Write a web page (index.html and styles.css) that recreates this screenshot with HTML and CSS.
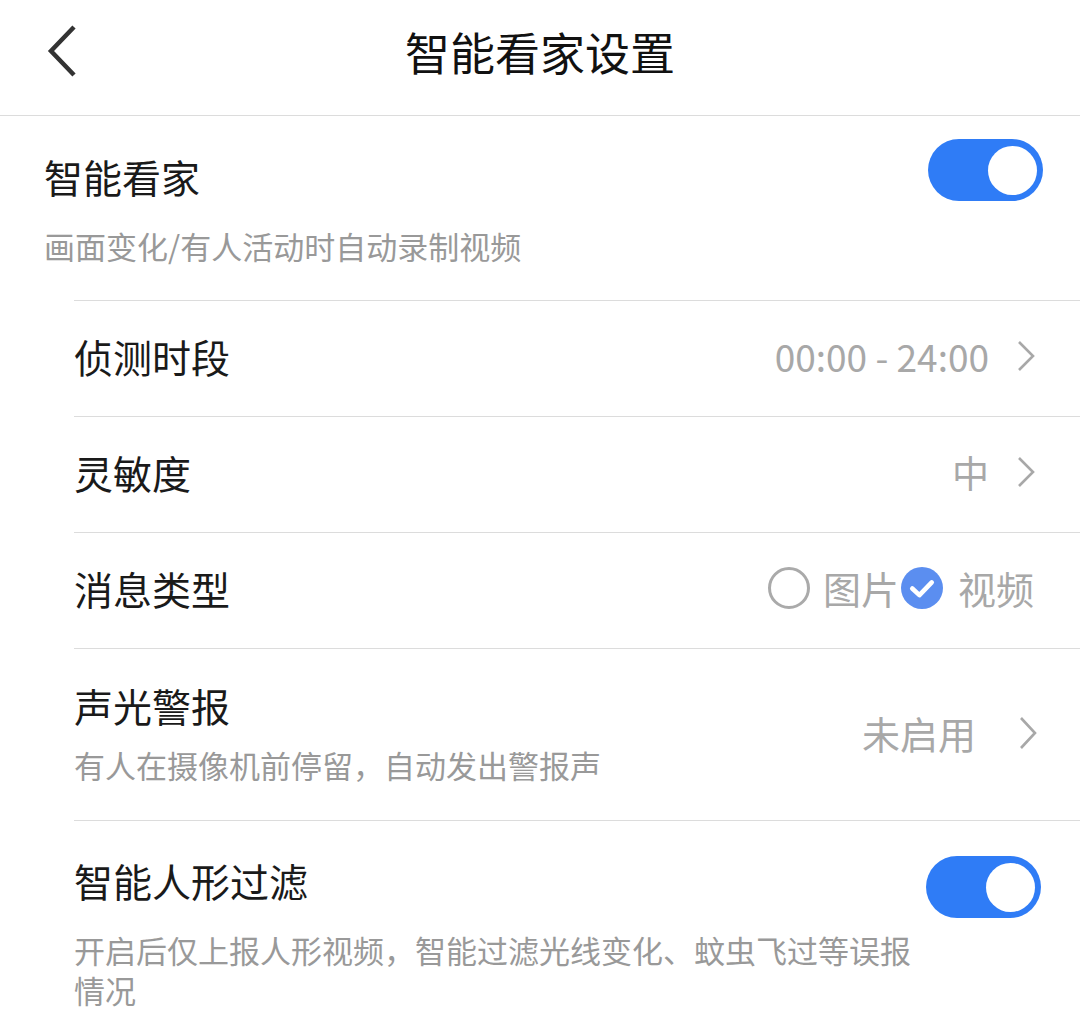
FILE: index.html
```html
<!DOCTYPE html>
<html lang="zh-CN">
<head>
    <meta charset="UTF-8">
    <meta name="viewport" content="width=device-width, initial-scale=1.0">
    <title>智能看家设置</title>
    <link rel="stylesheet" href="styles.css">
</head>
<body>
    <!-- Top bar -->
    <header class="topbar">
        <span class="back">
            <svg width="34" height="52" viewBox="0 0 34 52"><polyline points="28,2 5,26 28,50" fill="none" stroke="#333" stroke-width="4.5"/></svg>
        </span>
        <h1 class="title">智能看家设置</h1>
        <span></span>
    </header>

    <!-- Main switch -->
    <section class="home">
        <div class="home-head">
            <span class="home-title">智能看家</span>
            <label class="switch">
                <input type="checkbox" checked>
                <span class="slider"></span>
            </label>
        </div>
        <p class="sub">画面变化/有人活动时自动录制视频</p>
    </section>

    <!-- Settings list -->
    <ul class="list">
        <li class="row">
            <span class="row-title">侦测时段</span>
            <span class="value">00:00 - 24:00<svg class="chev" width="20" height="32" viewBox="0 0 20 32"><polyline points="3,2 17,16 3,30" fill="none" stroke="#a8a8a8" stroke-width="2.6"/></svg></span>
        </li>
        <li class="row">
            <span class="row-title">灵敏度</span>
            <span class="value">中<svg class="chev" width="20" height="32" viewBox="0 0 20 32"><polyline points="3,2 17,16 3,30" fill="none" stroke="#a8a8a8" stroke-width="2.6"/></svg></span>
        </li>
        <li class="row">
            <span class="row-title">消息类型</span>
            <span class="value choices">
                <span class="radio"></span>
                <span class="opt">图片</span>
                <span class="radio on">
                    <svg width="42" height="42" viewBox="0 0 41 41"><circle cx="20.5" cy="20.5" r="20.5" fill="#5b8ef0"/><polyline points="11,21 18,27.5 30,15" fill="none" stroke="#fff" stroke-width="4.5" stroke-linecap="round" stroke-linejoin="round"/></svg>
                </span>
                <span class="opt">视频</span>
            </span>
        </li>
        <li class="row tall">
            <div class="text">
                <span class="row-title">声光警报</span>
                <p class="sub">有人在摄像机前停留，自动发出警报声</p>
            </div>
            <span class="value">未启用<svg class="chev" width="20" height="34" viewBox="0 0 20 34"><polyline points="3,2 17,17 3,32" fill="none" stroke="#a8a8a8" stroke-width="2.6"/></svg></span>
        </li>
        <li class="row filter">
            <div class="filter-head">
                <span class="row-title">智能人形过滤</span>
                <label class="switch">
                    <input type="checkbox" checked>
                    <span class="slider"></span>
                </label>
            </div>
            <p class="sub wrap">开启后仅上报人形视频，智能过滤光线变化、蚊虫飞过等误报情况</p>
        </li>
    </ul>
</body>
</html>
```

FILE: styles.css
```css
body {
    margin: 0;
    background: #fff;
    font-family: "Noto Sans CJK SC", "Noto Sans", sans-serif;
    color: #1a1a1a;
}
.topbar {
    display: grid;
    grid-template-columns: 150px 1fr 150px;
    align-items: center;
    height: 115px;
    border-bottom: 1px solid #dcdcdc;
}
.back {
    display: flex;
    padding-left: 46px;
    margin-top: -14px;
}
.title {
    margin: 0;
    margin-top: -12px;
    text-align: center;
    font-size: 45px;
    font-weight: 400;
    color: #111;
}
.home {
    padding: 23px 37px 34px 44px;
}
.home-head {
    display: flex;
    justify-content: space-between;
    align-items: center;
}
.home-title {
    font-size: 39px;
    line-height: 40px;
    margin-top: 12px;
}
.sub {
    margin: 25px 0 0;
    font-size: 31px;
    line-height: 40px;
    color: #999;
}
.switch {
    position: relative;
    display: inline-block;
    width: 115px;
    height: 62px;
}
.switch input {
    opacity: 0;
    width: 0;
    height: 0;
}
.slider {
    position: absolute;
    top: 0;
    left: 0;
    right: 0;
    bottom: 0;
    border-radius: 31px;
    background-color: #ccc;
}
.slider:before {
    position: absolute;
    content: "";
    width: 49px;
    height: 49px;
    top: 6.5px;
    left: 7px;
    border-radius: 50%;
    background-color: #fff;
}
input:checked + .slider {
    background-color: #2f7cf6;
}
input:checked + .slider:before {
    transform: translateX(53px);
}
.list {
    list-style: none;
    margin: 0 0 0 74px;
    padding: 0;
}
.row {
    display: flex;
    justify-content: space-between;
    align-items: center;
    height: 109px;
    border-top: 1px solid #dcdcdc;
    padding: 0 44px 6px 0;
}
.row-title {
    font-size: 39px;
    line-height: 50px;
}
.value {
    display: flex;
    align-items: center;
    font-size: 37px;
    color: #a8a8a8;
}
.chev {
    margin-left: 27px;
}
.choices {
    font-size: 38px;
}
.radio {
    width: 36px;
    height: 36px;
    border: 3px solid #aaa;
    border-radius: 50%;
    margin-right: 13px;
}
.radio.on {
    width: 42px;
    height: 42px;
    border: none;
    margin-right: 15px;
}
.radio.on svg {
    display: block;
}
.opt {
    margin-right: 2px;
}
.tall {
    height: 167px;
    padding: 0 42px 4px 0;
}
.tall .text {
    display: flex;
    flex-direction: column;
}
.tall .sub {
    margin-top: 15px;
}
.tall .value {
    font-size: 38px;
}
.tall .chev {
    margin-left: 42px;
}
.filter {
    display: block;
    height: auto;
    padding: 34px 39px 30px 0;
}
.filter-head {
    display: flex;
    justify-content: space-between;
    align-items: center;
}
.filter-head .row-title {
    margin-bottom: 14px;
}
.sub.wrap {
    margin-top: 11px;
    max-width: 850px;
}
```
